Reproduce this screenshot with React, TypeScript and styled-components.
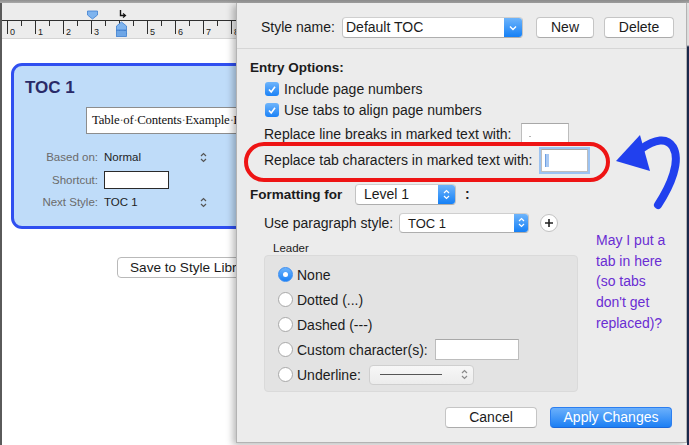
import styled, { createGlobalStyle } from "styled-components";

const GlobalStyle = createGlobalStyle`
  html, body { margin: 0; padding: 0; background: #ffffff; }
  body {
    font-family: "Liberation Sans", Arial, sans-serif;
    font-size: 14px;
    color: #1b1b1b;
  }
`;

const Page = styled.div`
  width: 689px;
  height: 445px;
  overflow: hidden;
  display: flex;
  flex-direction: column;
  background: #ffffff;
`;

const TopStrip = styled.div`
  height: 3px;
  background: linear-gradient(#8e8e8e, #a9a9a9);
  flex-shrink: 0;
`;

const Workspace = styled.div`
  flex: 1;
  display: flex;
  background: #ffffff;
`;

// ---------- document window behind the sheet ----------
const DocWindow = styled.div`
  width: 234px;
  border-left: 2px solid #5a5a5a;
  overflow: hidden;
  display: flex;
  flex-direction: column;
`;

const Ruler = styled.div`
  height: 35px;
  background: #ececec;
  border-bottom: 1px solid #d4d4d4;
  flex-shrink: 0;
`;

const DocBody = styled.div`
  padding: 24px 0 0 9px;
  display: flex;
  flex-direction: column;
`;

const StyleCard = styled.div`
  width: 270px;
  height: 160px;
  box-sizing: content-box;
  border: 3px solid #2f4ff0;
  border-radius: 11px;
  background: #bfdcf9;
  padding: 0 0 0 11px;
  display: flex;
  flex-direction: column;
`;

const CardTitle = styled.div`
  margin-top: 12px;
  height: 20px;
  font-size: 17px;
  font-weight: bold;
  color: #2a2a68;
  line-height: 20px;
`;

const SampleBox = styled.div`
  margin: 9px 0 0 61px;
  width: 220px;
  height: 25px;
  background: #ffffff;
  border: 1px solid #8d8d8d;
  font-family: "Liberation Serif", "Times New Roman", serif;
  font-size: 12.8px;
  letter-spacing: -0.15px;
  line-height: 25px;
  padding-left: 5px;
  white-space: nowrap;
  overflow: hidden;
  color: #111;
`;

const Dot = styled.span`
  color: #777;
  letter-spacing: -0.6px;
`;

const CardForm = styled.div`
  margin-top: 12px;
  display: grid;
  grid-template-columns: 73px 90px 10px;
  column-gap: 6px;
  grid-auto-rows: 22.5px;
  align-items: center;
`;

const CardLabel = styled.div`
  text-align: right;
  font-size: 11.5px;
  color: #6b6b6b;
  white-space: nowrap;
`;

const CardValue = styled.div`
  font-size: 11.5px;
  color: #1e1e1e;
`;

const ShortcutField = styled.div`
  width: 63px;
  height: 16px;
  background: #fff;
  border: 1px solid #2a2a2a;
`;

const SaveButton = styled.div`
  margin: 28px 0 0 106px;
  width: 170px;
  height: 21px;
  box-sizing: border-box;
  border: 1px solid #b9b9b9;
  border-radius: 4px;
  background: #fff;
  font-size: 13.6px;
  line-height: 19px;
  padding-left: 12px;
  white-space: nowrap;
`;

// ---------- the sheet ----------
const Sheet = styled.div`
  position: relative;
  z-index: 1;
  width: 451px;
  height: 440px;
  box-sizing: border-box;
  background: #ececec;
  border: 1px solid #b3b3b3;
  border-top: none;
  box-shadow: -3px 2px 7px rgba(0, 0, 0, 0.28);
  display: flex;
  flex-direction: column;
`;

const DesktopEdge = styled.div`
  width: 2px;
  background: linear-gradient(#e6e6e6 0, #e6e6e6 42px, #1c2b4f 44px);
`;

const SheetHeader = styled.div`
  height: 46px;
  box-sizing: border-box;
  padding: 14px 0 0 24px;
  border-bottom: 1px solid #d6d6d6;
  display: flex;
  align-items: flex-start;
`;

const Label = styled.div<{ $w?: number; $bold?: boolean }>`
  width: ${(p) => (p.$w ? `${p.$w}px` : "auto")};
  flex-shrink: 0;
  font-weight: ${(p) => (p.$bold ? "bold" : "normal")};
  font-size: ${(p) => (p.$bold ? 13.5 : 14)}px;
  white-space: nowrap;
`;

const PopUp = styled.div<{ $w: number; $h?: number; $btn: number; $ml?: number }>`
  width: ${(p) => p.$w}px;
  height: ${(p) => p.$h ?? 21}px;
  margin-left: ${(p) => p.$ml ?? 0}px;
  box-sizing: border-box;
  flex-shrink: 0;
  display: flex;
  background: #fff;
  border: 1px solid #c3c3c3;
  border-top-color: #cfcfcf;
  border-bottom-color: #aeaeae;
  border-radius: 4px;
  overflow: hidden;
  & > span {
    flex: 1;
    padding-left: ${(p) => (p.$w > 150 ? 3 : 8)}px;
    line-height: ${(p) => (p.$h ?? 21) - 2}px;
    white-space: nowrap;
  }
  & > i {
    width: ${(p) => p.$btn}px;
    display: flex;
    align-items: center;
    justify-content: center;
    background: linear-gradient(#6db4fb, #1580f6);
  }
`;

const SmallText = styled.span<{ $size?: number }>`
  font-size: ${(p) => p.$size ?? 14}px;
`;

const PushButton = styled.div<{ $w: number; $ml?: number; $primary?: boolean }>`
  width: ${(p) => p.$w}px;
  height: 21px;
  margin-left: ${(p) => p.$ml ?? 0}px;
  box-sizing: border-box;
  border-radius: 4px;
  text-align: center;
  line-height: 19px;
  font-size: 14px;
  border: 1px solid ${(p) => (p.$primary ? "#2b7ef0" : "#c5c5c5")};
  border-bottom-color: ${(p) => (p.$primary ? "#1c68d9" : "#ababab")};
  background: ${(p) => (p.$primary ? "linear-gradient(#6bb0fb, #1c7ff4)" : "#ffffff")};
  color: ${(p) => (p.$primary ? "#ffffff" : "#1b1b1b")};
`;

const SheetBody = styled.div`
  padding-left: 13px;
  display: flex;
  flex-direction: column;
`;

const Row = styled.div<{ $h: number; $mt: number; $indent?: number }>`
  height: ${(p) => p.$h}px;
  margin-top: ${(p) => p.$mt}px;
  padding-left: ${(p) => p.$indent ?? 0}px;
  display: flex;
  align-items: center;
`;

const CheckBox = styled.div`
  width: 14px;
  height: 14px;
  border-radius: 3px;
  background: linear-gradient(#6fb5fb, #1b82f7);
  display: flex;
  align-items: center;
  justify-content: center;
  margin-right: 5px;
`;

const TextField = styled.div<{ $w: number; $h: number; $focus?: boolean }>`
  width: ${(p) => p.$w}px;
  height: ${(p) => p.$h}px;
  box-sizing: border-box;
  flex-shrink: 0;
  background: #fff;
  border: 1px solid #bdbdbd;
  border-top-color: #a8a8a8;
  box-shadow: ${(p) => (p.$focus ? "0 0 0 2px #9cc3f2" : "none")};
  display: flex;
  align-items: center;
  padding-left: 3px;
`;

const TabSel = styled.div`
  width: 3px;
  height: 13px;
  background: #a9c9f3;
  border-left: 1px solid #6f9fe0;
`;

const Invisible = styled.div`
  width: 2px;
  height: 1px;
  margin: 5px 0 0 4px;
  background: #b4b4b4;
`;

const Colon = styled.span`
  margin-left: 9px;
  font-weight: bold;
`;

const PlusButton = styled.div`
  width: 18px;
  height: 18px;
  margin-left: 11px;
  box-sizing: border-box;
  border-radius: 50%;
  background: #fff;
  border: 1px solid #c2c2c2;
  display: flex;
  align-items: center;
  justify-content: center;
`;

const LeaderGroup = styled.div`
  margin-left: 14px;
  width: 314px;
  height: 137px;
  box-sizing: border-box;
  border-radius: 4px;
  background: #e3e3e3;
  border: 1px solid #dadada;
  padding: 6px 0 0 13px;
  display: flex;
  flex-direction: column;
`;

const RadioRow = styled.div`
  height: 25px;
  display: flex;
  align-items: center;
`;

const Radio = styled.div<{ $on?: boolean }>`
  width: 15px;
  height: 15px;
  box-sizing: border-box;
  border-radius: 50%;
  flex-shrink: 0;
  margin-right: 4px;
  background: ${(p) => (p.$on ? "linear-gradient(#6cb3fb, #1a81f6)" : "#ffffff")};
  border: 1px solid ${(p) => (p.$on ? "#3c8ef2" : "#a8a8a8")};
  display: flex;
  align-items: center;
  justify-content: center;
  &::after {
    content: "";
    display: ${(p) => (p.$on ? "block" : "none")};
    width: 5px;
    height: 5px;
    border-radius: 50%;
    background: #fff;
  }
`;

const LineSelect = styled.div`
  width: 105px;
  height: 20px;
  box-sizing: border-box;
  border: 1px solid #cfcfcf;
  border-radius: 4px;
  background: linear-gradient(#f7f7f7, #ececec);
  display: flex;
  align-items: center;
  padding: 0 5px 0 10px;
  justify-content: space-between;
`;

const LineSample = styled.div`
  width: 62px;
  height: 1px;
  background: #555;
`;

const Footer = styled.div`
  margin-top: 15px;
  padding-right: 14px;
  display: flex;
  justify-content: flex-end;
`;

// ---------- annotations on top ----------
const RedRing = styled.div`
  position: absolute;
  left: 7px;
  top: 139px;
  width: 366px;
  height: 40px;
  box-sizing: border-box;
  border: 4px solid #ee1414;
  border-radius: 20px;
  pointer-events: none;
`;

const ArrowMark = styled.svg`
  position: absolute;
  left: 370px;
  top: 124px;
`;

const Note = styled.div`
  position: absolute;
  left: 359px;
  top: 227px;
  font-size: 14px;
  line-height: 20.7px;
  color: #6a2dd3;
  white-space: nowrap;
`;

const ChevronDown = () => (
  <svg width="8" height="6" viewBox="0 0 8 6">
    <path d="M1 1.5 L4 4.5 L7 1.5" stroke="#fff" strokeWidth="1.4" fill="none" />
  </svg>
);

const UpDown = ({ color = "#fff" }: { color?: string }) => (
  <svg width="7" height="11" viewBox="0 0 7 11">
    <path d="M1 4 L3.5 1.5 L6 4 M1 7 L3.5 9.5 L6 7" stroke={color} strokeWidth="1.2" fill="none" />
  </svg>
);

const Tick = () => (
  <svg width="10" height="9" viewBox="0 0 10 9">
    <path d="M2 4.5 L4.2 7 L8 1.8" stroke="#fff" strokeWidth="1.6" fill="none" />
  </svg>
);

const RulerDrawing = () => {
  const majors = [0, 1, 2, 3, 4, 5, 6, 7, 8];
  return (
    <svg width="234" height="35" viewBox="2 3 234 35">
      <line x1="0" y1="20.5" x2="236" y2="20.5" stroke="#2e2e2e" strokeWidth="1" />
      {majors.map((n) => {
        const x = 7.5 + n * 28;
        return (
          <g key={n}>
            <line x1={x} y1="20" x2={x} y2="34" stroke="#2e2e2e" strokeWidth="1" />
            <line x1={x + 14} y1="20" x2={x + 14} y2="26" stroke="#2e2e2e" strokeWidth="1" />
            <text x={x + 2.5} y="35" fontSize="9" fontFamily="Liberation Sans, Arial, sans-serif" fill="#222">
              {n}
            </text>
          </g>
        );
      })}
      <path d="M87.5 11 L97.5 11 L97.5 15 L92.5 19 L87.5 15 Z" fill="#7fb4ee" stroke="#3f7fd0" strokeWidth="0.8" />
      <path d="M120.5 10 L120.5 15.5 L125 15.5" stroke="#111" strokeWidth="1.4" fill="none" />
      <path d="M123 13.5 L125.5 15.5 L123 17.5" stroke="#111" strokeWidth="1.2" fill="none" />
      <path d="M116.5 30 L116.5 26 L121.5 22 L126.5 26 L126.5 30 Z" fill="#7fb4ee" stroke="#3f7fd0" strokeWidth="0.8" />
      <rect x="116.5" y="30.5" width="10" height="6" fill="#6ea6e6" stroke="#3f7fd0" strokeWidth="0.8" />
    </svg>
  );
};

const sample = ["Table", "of", "Contents", "Example", "Entry"];

export default function App() {
  return (
    <Page>
      <GlobalStyle />
      <TopStrip />
      <Workspace>
        <DocWindow>
          <Ruler>
            <RulerDrawing />
          </Ruler>
          <DocBody>
            <StyleCard>
              <CardTitle>TOC 1</CardTitle>
              <SampleBox>
                {sample.map((w, i) => (
                  <span key={w}>
                    {i > 0 && <Dot>·</Dot>}
                    {w}
                  </span>
                ))}
              </SampleBox>
              <CardForm>
                <CardLabel>Based on:</CardLabel>
                <CardValue>Normal</CardValue>
                <UpDown color="#555" />
                <CardLabel>Shortcut:</CardLabel>
                <ShortcutField />
                <span />
                <CardLabel>Next Style:</CardLabel>
                <CardValue>TOC 1</CardValue>
                <UpDown color="#555" />
              </CardForm>
            </StyleCard>
            <SaveButton>Save to Style Library</SaveButton>
          </DocBody>
        </DocWindow>

        <Sheet>
          <SheetHeader>
            <Label $w={81} style={{ lineHeight: "21px" }}>Style name:</Label>
            <PopUp $w={181} $btn={18}>
              <span>Default TOC</span>
              <i><ChevronDown /></i>
            </PopUp>
            <PushButton $w={58} $ml={13}>New</PushButton>
            <PushButton $w={70} $ml={10}>Delete</PushButton>
          </SheetHeader>

          <SheetBody>
            <Row $h={20} $mt={8}>
              <Label $bold>Entry Options:</Label>
            </Row>
            <Row $h={20} $mt={2} $indent={15}>
              <CheckBox><Tick /></CheckBox>
              <Label>Include page numbers</Label>
            </Row>
            <Row $h={20} $mt={1} $indent={15}>
              <CheckBox><Tick /></CheckBox>
              <Label>Use tabs to align page numbers</Label>
            </Row>
            <Row $h={21} $mt={3} $indent={14}>
              <Label $w={257}>Replace line breaks in marked text with:</Label>
              <TextField $w={48} $h={21}>
                <Invisible />
              </TextField>
            </Row>
            <Row $h={24} $mt={4} $indent={14}>
              <Label $w={277}>Replace tab characters in marked text with:</Label>
              <TextField $w={47} $h={23} $focus>
                <TabSel />
              </TextField>
            </Row>
            <Row $h={22} $mt={11}>
              <Label $w={105} $bold>Formatting for</Label>
              <PopUp $w={101} $btn={17}>
                <span>Level 1</span>
                <i><UpDown /></i>
              </PopUp>
              <Colon>:</Colon>
            </Row>
            <Row $h={21} $mt={7} $indent={14}>
              <Label $w={135}>Use paragraph style:</Label>
              <PopUp $w={130} $h={20} $btn={14}>
                <span><SmallText $size={13}>TOC 1</SmallText></span>
                <i><UpDown /></i>
              </PopUp>
              <PlusButton>
                <svg width="10" height="10" viewBox="0 0 10 10">
                  <path d="M5 1 V9 M1 5 H9" stroke="#222" strokeWidth="1.6" />
                </svg>
              </PlusButton>
            </Row>
            <Row $h={14} $mt={8} $indent={23}>
              <SmallText $size={11.5}>Leader</SmallText>
            </Row>
            <LeaderGroup>
              <RadioRow>
                <Radio $on />
                <Label>None</Label>
              </RadioRow>
              <RadioRow>
                <Radio />
                <Label>Dotted (...)</Label>
              </RadioRow>
              <RadioRow>
                <Radio />
                <Label>Dashed (---)</Label>
              </RadioRow>
              <RadioRow>
                <Radio />
                <Label $w={138}>Custom character(s):</Label>
                <TextField $w={84} $h={21} />
              </RadioRow>
              <RadioRow>
                <Radio />
                <Label $w={72}>Underline:</Label>
                <LineSelect>
                  <LineSample />
                  <UpDown color="#8a8a8a" />
                </LineSelect>
              </RadioRow>
            </LeaderGroup>
            <Footer>
              <PushButton $w={92}>Cancel</PushButton>
              <PushButton $w={122} $ml={13} $primary>Apply Changes</PushButton>
            </Footer>
          </SheetBody>

          <RedRing />
          <ArrowMark width="80" height="90" viewBox="0 0 80 90">
            <path
              d="M51 78 C64 58 74 34 66 20 C60 10 48 12 34 22"
              stroke="#2140ee"
              strokeWidth="8"
              strokeLinecap="round"
              fill="none"
            />
            <path d="M9 34 L33 8 L43 44 Z" fill="#2140ee" />
          </ArrowMark>
          <Note>
            May I put a<br />
            tab in here<br />
            (so tabs<br />
            don't get<br />
            replaced)?
          </Note>
        </Sheet>
        <DesktopEdge />
      </Workspace>
    </Page>
  );
}
